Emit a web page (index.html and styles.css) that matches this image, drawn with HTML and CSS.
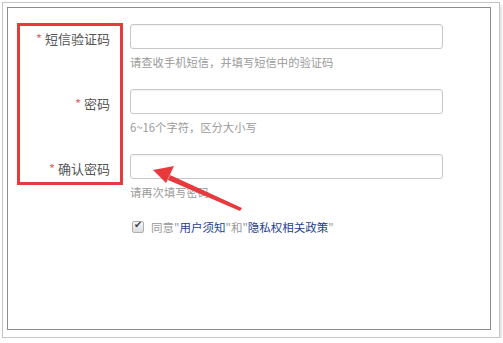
FILE: index.html
```html
<!DOCTYPE html>
<html>
<head>
<title>Register</title>
<meta name="viewport" content="width=device-width, initial-scale=1">
<link rel="stylesheet" href="styles.css">
</head>
<body>

<div class="shot">
  <div class="panel">
    <form class="regform">
      <div class="row">
        <label class="lbl" for="sms"><span class="req">*</span> 短信验证码</label>
        <div class="field">
          <input type="text" id="sms">
          <div class="hint">请查收手机短信，并填写短信中的验证码</div>
        </div>
      </div>

      <div class="row">
        <label class="lbl" for="pwd"><span class="req">*</span> 密码</label>
        <div class="field">
          <input type="password" id="pwd">
          <div class="hint">6~16个字符，区分大小写</div>
        </div>
      </div>

      <div class="row">
        <label class="lbl" for="pwd2"><span class="req">*</span> 确认密码</label>
        <div class="field">
          <input type="password" id="pwd2">
          <div class="hint">请再次填写密码</div>
        </div>
      </div>

      <div class="agree">
        <input type="checkbox" class="cb" checked>
        <span>同意"<a href="#">用户须知</a>"和"<a href="#">隐私权相关政策</a>"</span>
      </div>
    </form>
  </div>
</div>

<!-- annotation drawn over the form -->
<div class="markbox"></div>
<svg class="arrow" width="503" height="343" viewBox="0 0 503 343">
  <polygon points="242,208 240,211 168,180 170,175" fill="#e8393d"/>
  <polygon points="153,170 174,166 166,183" fill="#e8393d"/>
</svg>

</body>
</html>
```

FILE: styles.css
```css
body {
  margin: 0;
  background: #fff;
  font-family: "Noto Sans CJK SC", "Noto Sans", sans-serif;
}

.shot {
  margin: 2px 0 0 2px;
  width: 484px;
  height: 323px;
  padding: 4px 8px 7px 4px;
  border: 1px solid #c4c4c4;
  box-shadow: 2px 3px 3px rgba(0,0,0,0.12);
  background: #fff;
}

.panel {
  height: 321px;
  border: 1px solid #8c8c8c;
  background: #fff;
}

.regform {
  padding-top: 16px;
}

.row {
  display: flex;
  height: 65px;
}

.lbl {
  width: 102px;
  text-align: right;
  font-size: 13px;
  line-height: 29px;
  color: #555;
}

.req {
  color: #e06a6a;
}

.field {
  margin-left: 20px;
}

.field input {
  display: block;
  width: 313px;
  height: 25px;
  margin: 0;
  border: 1px solid #c8c8c8;
  border-radius: 3px;
  box-sizing: border-box;
  box-shadow: inset 0 1px 2px rgba(0,0,0,0.06);
}

.hint {
  margin-top: 5px;
  font-size: 11.3px;
  color: #9a9a9a;
}

.agree {
  display: flex;
  align-items: center;
  margin: 0 0 0 124px;
  font-size: 11.5px;
  color: #999;
}

/* old-style grey checkbox */
.cb {
  appearance: none;
  position: relative;
  margin: 0 7px 0 0;
  width: 12px;
  height: 12px;
  border: 1px solid #b0b0b0;
  border-radius: 2px;
  background: linear-gradient(#f6f6f6, #dcdcdc);
}

.cb:checked::after {
  content: "\2714";
  position: absolute;
  left: 1px;
  top: -3px;
  font-size: 10px;
  color: #444;
}

.agree a {
  color: #1e3f8f;
  text-decoration: none;
}

.markbox {
  position: absolute;
  left: 17px;
  top: 23px;
  width: 100px;
  height: 156px;
  border: 3px solid #e8393d;
}

.arrow {
  position: absolute;
  left: 0;
  top: 0;
}
```
